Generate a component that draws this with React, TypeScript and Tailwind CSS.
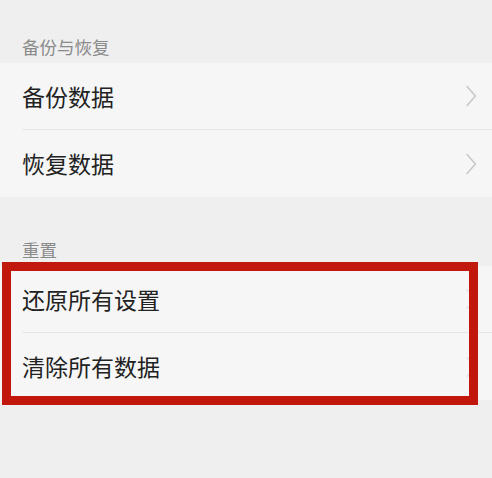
import React from "react";

// Пункты настроек, сгруппированные по секциям
const sections = [
  { title: "备份与恢复", items: ["备份数据", "恢复数据"], headerH: "h-[63px]" },
  { title: "重置", items: ["还原所有设置", "清除所有数据"], headerH: "h-[69px]" },
];

function Chevron({ faint = false }: { faint?: boolean }) {
  return (
    <svg width="12" height="22" viewBox="0 0 12 22" fill="none">
      <path
        d="M2 1.5 L10.5 11 L2 20.5"
        stroke={faint ? "#e4e4e4" : "#c9c9c9"}
        strokeWidth="1.6"
        strokeLinecap="round"
        strokeLinejoin="round"
      />
    </svg>
  );
}

export default function App() {
  return (
    <div
      className="relative w-[492px] h-[478px] bg-[#efefef] overflow-hidden"
      style={{ fontFamily: '"Noto Sans CJK SC", "Noto Sans", sans-serif' }}
    >
      {sections.map((section, s) => (
        <div key={section.title}>
          <div className={`${section.headerH} flex items-end pl-[22px] pb-[8px]`}>
            <span className="text-[17.5px] leading-[17px] text-[#8a8a8a]">{section.title}</span>
          </div>
          <div className="bg-[#f6f6f6]">
            {section.items.map((item, i) => (
              <div key={item} className="h-[67px] pl-[22px] flex">
                <div
                  className={`flex-1 flex items-center justify-between pr-[15px] ${
                    i < section.items.length - 1 ? "border-b border-[#e6e6e6]" : ""
                  }`}
                >
                  <span className="text-[23px] leading-none text-[#222222]">{item}</span>
                  {/* под рамкой стрелки почти не видно */}
                  <Chevron faint={s === 1} />
                </div>
              </div>
            ))}
          </div>
        </div>
      ))}

      {/* красная рамка-выделение поверх секции сброса */}
      <div className="absolute left-[2px] top-[262px] w-[476px] h-[143px] border-[9px] border-[#c1170d]" />
    </div>
  );
}
